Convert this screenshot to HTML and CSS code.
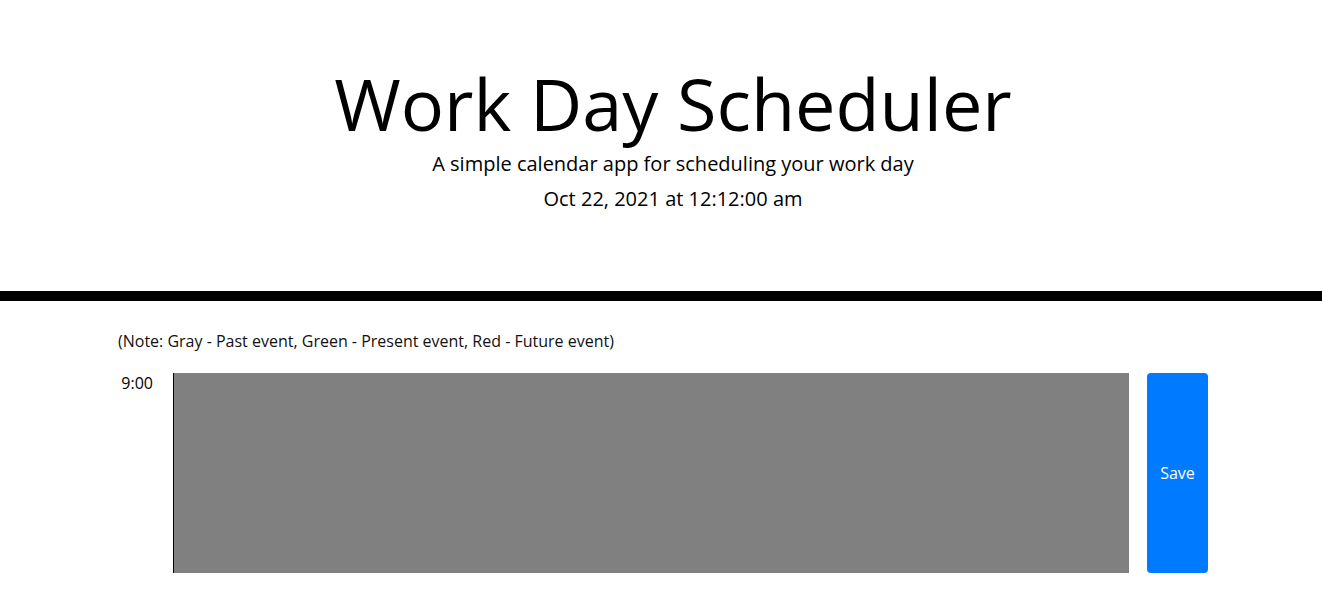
FILE: index.html
```html
<!DOCTYPE html>
<html lang="en">
<head>
<meta charset="utf-8">
<title>Work Day Scheduler</title>
<link rel="stylesheet" href="styles.css">
</head>
<body>
<header class="hero">
  <h1 class="title">Work Day Scheduler</h1>
  <p class="lead">A simple calendar app for scheduling your work day</p>
  <p class="current-day">Oct 22, 2021 at 12:12:00 am</p>
</header>
<main class="container">
  <p class="note">(Note: Gray - Past event, Green - Present event, Red - Future event)</p>
  <div class="time-block">
    <div class="hour">9:00</div>
    <textarea class="description past"></textarea>
    <button class="save-btn">Save</button>
  </div>
</main>
</body>
</html>
```

FILE: styles.css
```css
* { box-sizing: border-box; }
html, body { margin: 0; padding: 0; }
body {
  font-family: "Open Sans", "Liberation Sans", sans-serif;
  color: #000;
  background: #fff;
}
.hero {
  text-align: center;
  padding: 60px 0 77px 24px;
  border-bottom: 10px solid #000;
}
.title {
  margin: 0;
  font-size: 72px;
  font-weight: 400;
  line-height: 86px;
}
.lead {
  margin: 3px 0 0;
  font-size: 20px;
  font-weight: 400;
  line-height: 30px;
}
.current-day {
  margin: 5px 0 0;
  font-size: 20px;
  font-weight: 400;
  line-height: 30px;
}
.container {
  width: 1094px;
  margin: 0 auto;
  padding-left: 4px;
}
.note {
  margin: 28px 0 20px;
  font-size: 16px;
  line-height: 1.5;
  color: #111;
}
.time-block {
  display: flex;
  height: 200px;
}
.hour {
  width: 55px;
  padding-right: 20px;
  text-align: right;
  font-size: 16px;
  line-height: 1;
  padding-top: 2px;
}
.description {
  flex: 1;
  height: 200px;
  margin: 0;
  border: none;
  border-left: 1px solid #000;
  background: #808080;
  resize: none;
  padding: 8px;
  font-family: inherit;
}
.save-btn {
  width: 61px;
  margin-left: 18px;
  border: none;
  border-radius: 4px;
  background: #007bff;
  color: #fff;
  font-family: inherit;
  font-size: 16px;
}
```
